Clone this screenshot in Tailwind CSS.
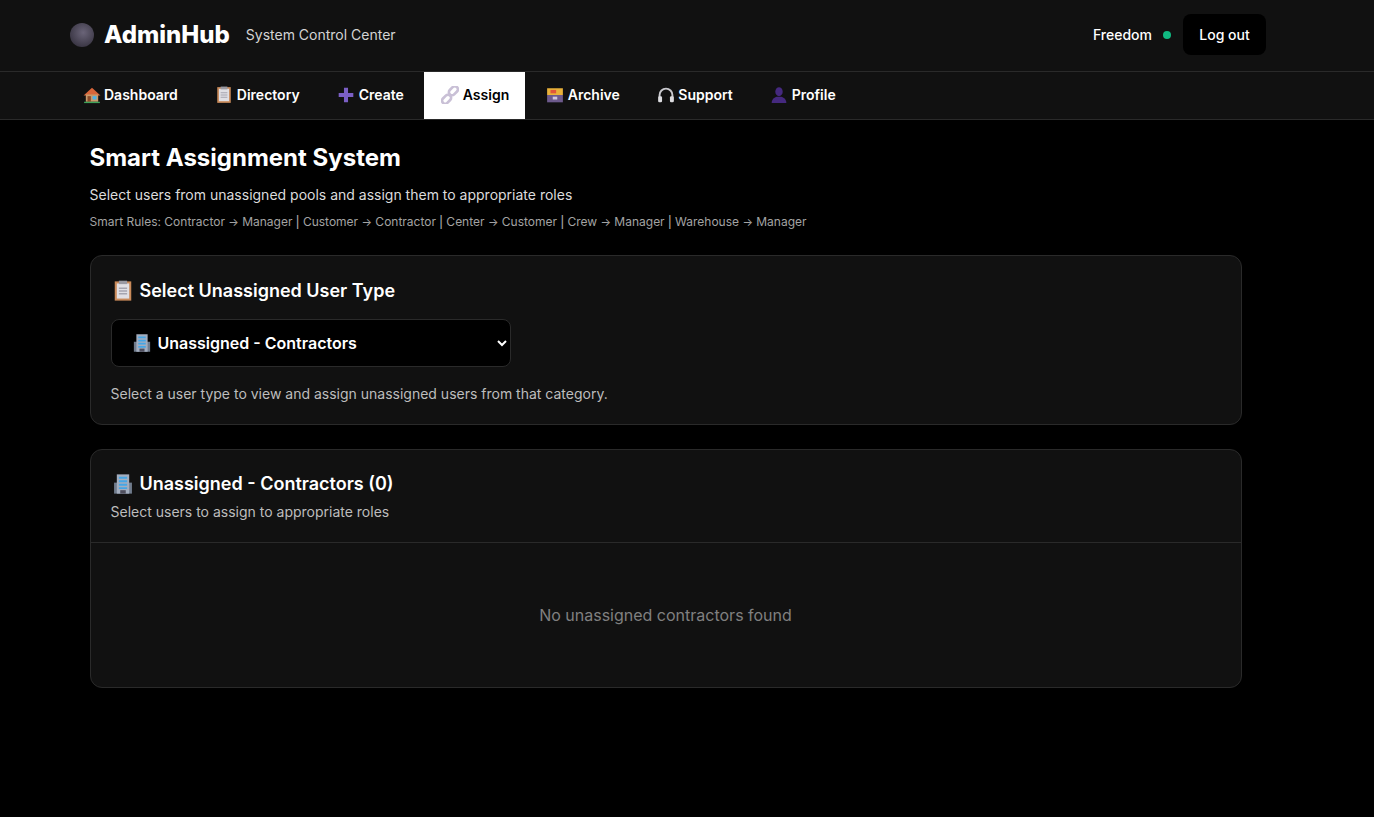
<!DOCTYPE html>
<html lang="en">
<head>
  <meta charset="UTF-8" />
  <meta name="viewport" content="width=device-width, initial-scale=1.0"/>
  <title>AdminHub</title>
  <script src="https://cdn.jsdelivr.net/npm/@tailwindcss/browser@4"></script>
</head>
<body class="bg-black text-white min-h-screen font-['Inter',sans-serif]">
  <header class="h-[72px] bg-[#111111] border-b border-[#2a2a2a] flex items-center justify-between pl-[70px] pr-[108px] pb-[2px]">
    <div class="flex items-center">
      <div class="w-6 h-6 rounded-full bg-[radial-gradient(circle_at_55%_40%,#6a6478,#3a3644_75%,#2c2a33)]"></div>
      <span class="ml-[10px] text-2xl font-extrabold">AdminHub</span>
      <span class="ml-4 text-sm text-[#d4d4d4]">System Control Center</span>
    </div>
    <div class="flex items-center">
      <span class="text-sm font-medium">Freedom</span>
      <span class="ml-[11px] w-2 h-2 rounded-full bg-[#10b981]"></span>
      <button class="ml-3 h-[41px] w-[83px] rounded-lg bg-black text-sm font-medium">Log out</button>
    </div>
  </header>

  <nav class="h-12 bg-[#111111] border-b border-[#2a2a2a] flex gap-1 pl-[66px]">
    <a class="px-4 pb-0.5 flex items-center text-sm font-semibold">
      <svg class="w-[18px] h-[18px] ml-px mr-[3px]" viewBox="0 0 16 16"><path d="M.5 8.500 8 1.500l7.500 7z" fill="#d9663a"/><rect x="2.500" y="7.500" width="11" height="6.500" fill="#c99a6b"/><rect x="4" y="9" width="3" height="5" fill="#8a4b2a"/><rect x="8.500" y="9" width="3.500" height="3" fill="#4fb3e8"/><rect x="1" y="14" width="14" height="1.200" fill="#3fa35a"/></svg>
      Dashboard</a>
    <a class="px-4 pb-0.5 flex items-center text-sm font-semibold">
      <svg class="w-[18px] h-[18px] ml-px mr-1" viewBox="0 0 16 16"><rect x="2" y="1" width="12" height="14" fill="#c98a5a"/><rect x="3.500" y="2.500" width="9" height="11" fill="#e0dfe4"/><rect x="5" y="0.500" width="6" height="2.500" fill="#9a9aa3"/><path d="M5 6h6M5 8h6M5 10h6" stroke="#a5a5b0"/></svg>
      Directory</a>
    <a class="px-4 pb-0.5 flex items-center text-sm font-semibold">
      <svg class="w-[18px] h-[18px] ml-px mr-1" viewBox="0 0 16 16"><path d="M8 1.500v13M1.500 8h13" stroke="#7b5fc4" stroke-width="3.600"/></svg>
      Create</a>
    <a class="px-4 pb-0.5 flex items-center text-sm font-semibold bg-white text-black">
      <svg class="w-[18px] h-[18px] ml-px mr-1" viewBox="0 0 16 16" fill="none" stroke="#c9c0d6" stroke-width="2.400"><rect x="6.500" y="1.500" width="9" height="5.500" rx="2.700" transform="rotate(-45 11 4.200)"/><rect x="0.500" y="9" width="9" height="5.500" rx="2.700" transform="rotate(-45 5 11.800)"/></svg>
      Assign</a>
    <a class="px-4 pb-0.5 flex items-center text-sm font-semibold">
      <svg class="w-[18px] h-[18px] ml-px mr-[3.5px]" viewBox="0 0 16 16"><rect x="1" y="2" width="14" height="6" fill="#e8b13a"/><rect x="4" y="3.500" width="5" height="3" fill="#e0553a"/><rect x="1" y="8" width="14" height="6.500" fill="#6d5a8c"/><rect x="6" y="9.500" width="4" height="2.500" fill="#cfc6de"/></svg>
      Archive</a>
    <a class="px-4 pb-0.5 flex items-center text-sm font-semibold">
      <svg class="w-[18px] h-[18px] ml-px mr-[3.5px]" viewBox="0 0 16 16" fill="none"><path d="M2.300 10V8a5.700 5.700 0 0 1 11.400 0v2" stroke="#c9c9ce" stroke-width="1.700"/><rect x="1" y="9" width="3.500" height="5.500" rx="1.200" fill="#dcdce0"/><rect x="11.500" y="9" width="3.500" height="5.500" rx="1.200" fill="#dcdce0"/></svg>
      Support</a>
    <a class="px-4 pb-0.5 flex items-center text-sm font-semibold">
      <svg class="w-[18px] h-[18px] ml-px mr-1" viewBox="0 0 16 16" fill="#45297f"><ellipse cx="8" cy="5" rx="3.300" ry="4"/><path d="M1.500 15c0-3.500 2.500-5 4.500-5.500h4c2 .5 4.500 2 4.500 5.500z"/></svg>
      Profile</a>
  </nav>

  <main class="w-[1152px] ml-[89.5px] pt-6">
    <h1 class="text-2xl font-bold leading-[28px]">Smart Assignment System</h1>
    <p class="mt-[13px] text-sm text-[#dcdcdc] leading-[20px]">Select users from unassigned pools and assign them to appropriate roles</p>
    <p class="mt-[9px] text-xs text-[#a3a3a3] leading-[16px]">Smart Rules: Contractor <span class="text-[11px]">→</span> Manager <span class="font-['Liberation_Sans'] text-sm leading-[0]">|</span> Customer <span class="text-[11px]">→</span> Contractor <span class="font-['Liberation_Sans'] text-sm leading-[0]">|</span> Center <span class="text-[11px]">→</span> Customer <span class="font-['Liberation_Sans'] text-sm leading-[0]">|</span> Crew <span class="text-[11px]">→</span> Manager <span class="font-['Liberation_Sans'] text-sm leading-[0]">|</span> Warehouse <span class="text-[11px]">→</span> Manager</p>

    <section class="mt-[25px] h-[170px] bg-[#111111] border border-[#2a2a2a] rounded-xl px-5 pt-[21px]">
      <h2 class="flex items-center text-lg font-semibold leading-[28px]">
        <svg class="w-[22px] h-[22px] ml-[1px] mr-[6px]" viewBox="0 0 16 16"><rect x="2" y="1" width="12" height="14" fill="#c98a5a"/><rect x="3.500" y="2.500" width="9" height="11" fill="#e0dfe4"/><rect x="5" y="0.500" width="6" height="2.500" fill="#9a9aa3"/><path d="M5 6h6M5 8h6M5 10h6" stroke="#a5a5b0"/></svg>
        Select Unassigned User Type</h2>
      <div class="relative mt-[14px] w-[400px]">
        <svg class="absolute left-[21px] top-[14px] w-5 h-5" viewBox="0 0 16 16"><rect x="1.500" y="7" width="13" height="8" fill="#6f7b8c"/><rect x="3.500" y="1" width="9" height="14" fill="#a3adbe"/><path d="M5 3.500h6M5 6h6M5 8.500h6M5 11h6" stroke="#45a6e6" stroke-width="1.400"/><rect x="6" y="12.500" width="4" height="2.500" fill="#4f4f5e"/></svg>
        <select class="w-full h-12 rounded-lg bg-black border border-[#2a2a2a] pl-[42px] pr-2 text-base font-semibold text-white">
          <option>Unassigned - Contractors</option>
        </select>
      </div>
      <p class="mt-[17px] text-sm text-[#bdbdbd] leading-[20px]">Select a user type to view and assign unassigned users from that category.</p>
    </section>

    <section class="mt-6 h-[239px] bg-[#111111] border border-[#2a2a2a] rounded-xl">
      <div class="h-[93px] border-b border-[#2a2a2a] px-5 pt-5">
        <h2 class="flex items-center text-lg font-semibold leading-[28px]">
          <svg class="w-[22px] h-[22px] ml-[1px] mr-[6px]" viewBox="0 0 16 16"><rect x="1.500" y="7" width="13" height="8" fill="#6f7b8c"/><rect x="3.500" y="1" width="9" height="14" fill="#a3adbe"/><path d="M5 3.500h6M5 6h6M5 8.500h6M5 11h6" stroke="#45a6e6" stroke-width="1.400"/><rect x="6" y="12.500" width="4" height="2.500" fill="#4f4f5e"/></svg>
          Unassigned - Contractors (0)</h2>
        <p class="mt-[4px] text-sm text-[#bdbdbd] leading-[20px]">Select users to assign to appropriate roles</p>
      </div>
      <div class="h-[144px] flex items-center justify-center text-base text-[#808080]">No unassigned contractors found</div>
    </section>
  </main>
</body>
</html>
